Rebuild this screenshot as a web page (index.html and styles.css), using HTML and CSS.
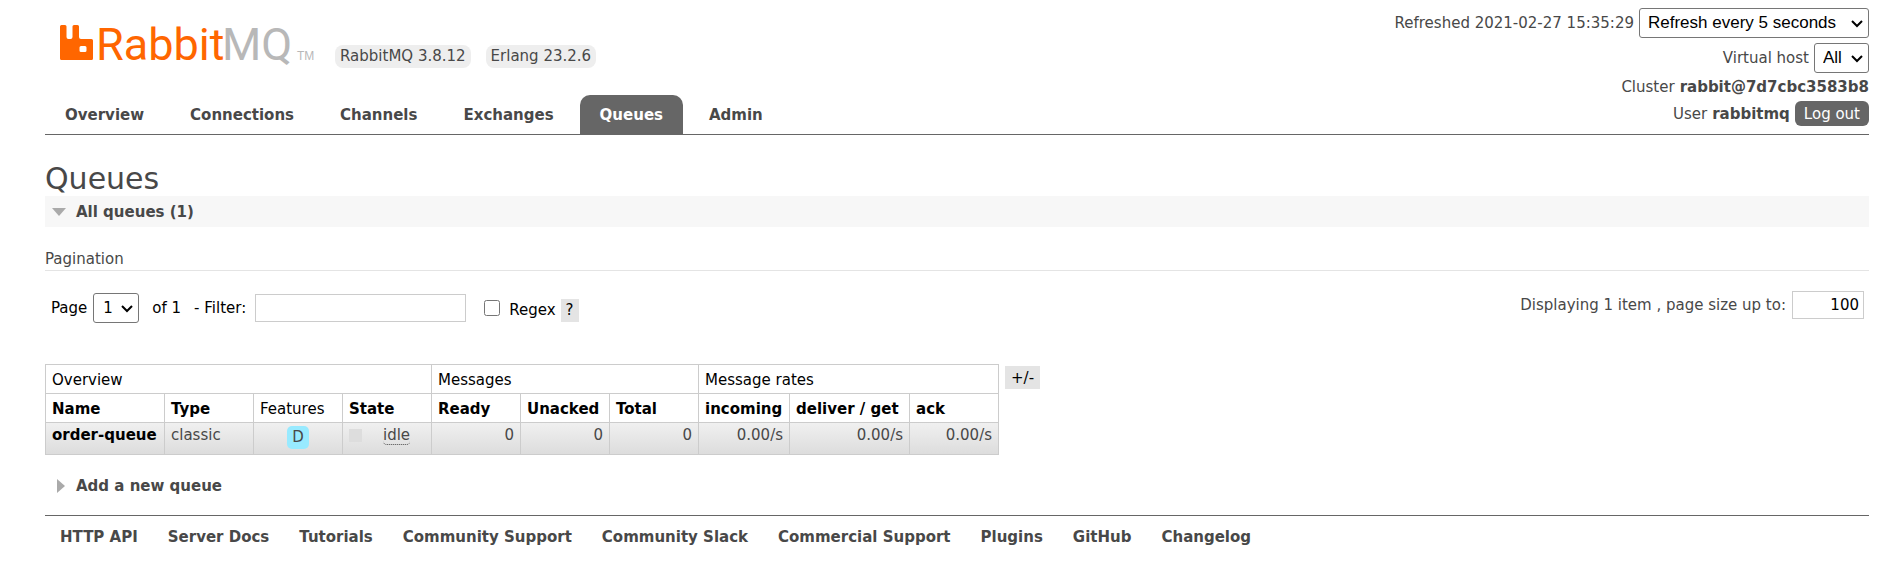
FILE: index.html
```html
<!DOCTYPE html>
<html lang="en">
<head>
<meta charset="utf-8">
<title>RabbitMQ Management</title>
<link rel="stylesheet" href="styles.css">
</head>
<body>
<header class="header">
  <div class="brand-area">
    <div class="brand">
      <svg class="logo" width="260" height="60" viewBox="0 0 260 60" role="img" aria-label="RabbitMQ">
        <path fill="#f60" fill-rule="evenodd" d="M1.500 11h3.500q1.500 0 1.500 1.500V23q0 2 2 2h2q2 0 2-2V12.500q0-1.500 1.500-1.500h3.500q1.500 0 1.500 1.500V23q0 2 2 2h10.500q1.500 0 1.500 1.500v18q0 1.500-1.500 1.500h-30Q0 46 0 44.500v-32Q0 11 1.500 11zM21 32q-1.500 0-1.500 1.500v3q0 1.500 1.500 1.500h4q1.500 0 1.500-1.500v-3q0-1.500-1.500-1.500z"/>
        <text class="logo-word logo-rabbit" x="36" y="46">Rabbit</text>
        <text class="logo-word logo-mq" x="162" y="46">MQ</text>
        <text class="logo-tm" x="237" y="46">TM</text>
      </svg>
      <span class="version">RabbitMQ 3.8.12</span>
      <span class="version">Erlang 23.2.6</span>
    </div>
    <nav class="tabs">
      <a class="tab" href="#overview">Overview</a>
      <a class="tab" href="#connections">Connections</a>
      <a class="tab" href="#channels">Channels</a>
      <a class="tab" href="#exchanges">Exchanges</a>
      <a class="tab tab-active" href="#queues">Queues</a>
      <a class="tab" href="#admin">Admin</a>
    </nav>
  </div>
  <div class="status">
    <div class="status-row"><label for="refresh">Refreshed 2021-02-27 15:35:29</label>
      <span class="select-wrap"><select id="refresh" class="select"><option>Refresh every 5 seconds</option></select><svg class="chevron" width="12" height="8" viewBox="0 0 12 8"><path d="M1 1l5 5 5-5"/></svg></span></div>
    <div class="status-row"><label for="vhost">Virtual host</label>
      <span class="select-wrap"><select id="vhost" class="select"><option>All</option></select><svg class="chevron" width="12" height="8" viewBox="0 0 12 8"><path d="M1 1l5 5 5-5"/></svg></span></div>
    <div class="status-row"><span>Cluster</span><b>rabbit@7d7cbc3583b8</b></div>
    <div class="status-row"><span>User</span><b>rabbitmq</b><button class="logout" type="button">Log out</button></div>
  </div>
</header>
<main class="main">
  <h1 class="title">Queues</h1>
  <h2 class="section section-open"><svg class="arrow" width="14" height="8" viewBox="0 0 14 8"><path d="M0 0h14L7 8z"/></svg>All queues (1)</h2>
  <h3 class="subtitle">Pagination</h3>
  <form class="pagination">
    <div class="pager">
      <label for="page">Page</label>
      <span class="select-wrap"><select id="page" class="select select-page"><option>1</option></select><svg class="chevron" width="12" height="8" viewBox="0 0 12 8"><path d="M1 1l5 5 5-5"/></svg></span>
      <span class="page-count">of 1</span>
      <label class="filter-label" for="filter">- Filter:</label>
      <input id="filter" class="field field-filter" type="text">
      <input id="regex" class="check" type="checkbox">
      <label class="regex-label" for="regex">Regex</label>
      <button class="chip" type="button">?</button>
    </div>
    <div class="page-size">
      <label for="size">Displaying 1 item , page size up to:</label>
      <input id="size" class="field field-size" type="text" value="100">
    </div>
  </form>
  <div class="table-area">
    <table class="queues">
      <colgroup><col class="col-name"><col class="col-std" span="3"><col class="col-std" span="3"><col class="col-incoming"><col class="col-deliver"><col class="col-std"></colgroup>
      <thead>
        <tr><th class="group" colspan="4">Overview</th><th class="group" colspan="3">Messages</th><th class="group" colspan="3">Message rates</th></tr>
        <tr><th>Name</th><th>Type</th><th class="group">Features</th><th>State</th><th>Ready</th><th>Unacked</th><th>Total</th><th>incoming</th><th>deliver / get</th><th>ack</th></tr>
      </thead>
      <tbody>
        <tr><td><a class="queue-link" href="#order-queue">order-queue</a></td><td>classic</td><td class="center"><span class="feature">D</span></td><td><span class="state"><span class="state-box"></span><abbr class="state-text">idle</abbr></span></td><td class="num">0</td><td class="num">0</td><td class="num">0</td><td class="num">0.00/s</td><td class="num">0.00/s</td><td class="num">0.00/s</td></tr>
      </tbody>
    </table>
    <button class="chip chip-columns" type="button">+/-</button>
  </div>
  <h2 class="section"><svg class="arrow arrow-closed" width="8" height="14" viewBox="0 0 8 14"><path d="M0 0v14l8-7z"/></svg>Add a new queue</h2>
</main>
<footer class="footer">
  <a href="#api">HTTP API</a>
  <a href="#docs">Server Docs</a>
  <a href="#tutorials">Tutorials</a>
  <a href="#support">Community Support</a>
  <a href="#slack">Community Slack</a>
  <a href="#commercial">Commercial Support</a>
  <a href="#plugins">Plugins</a>
  <a href="#github">GitHub</a>
  <a href="#changelog">Changelog</a>
</footer>
</body>
</html>
```

FILE: styles.css
```css
* { box-sizing: border-box; }
body {
  margin: 0;
  padding: 8px 31px 0 45px;
  background: #fff;
  color: #484848;
  font: 15px/18px Verdana, "DejaVu Sans", sans-serif;
}
a { color: inherit; text-decoration: none; }
button, input, select { font: inherit; }

.header {
  display: flex;
  justify-content: space-between;
  border-bottom: 1px solid #666;
}
.brand-area { display: flex; flex-direction: column; justify-content: space-between; }
.brand { display: flex; align-items: flex-end; gap: 15px; padding-left: 15px; }
.logo { flex: none; margin-top: 6px; }
.logo-word { font-family: Roboto, sans-serif; font-size: 45px; }
.logo-rabbit { fill: #f60; }
.logo-mq { fill: #b8b8b8; }
.logo-tm { fill: #b8b8b8; font-family: "Liberation Sans", sans-serif; font-size: 12px; }
.version { margin-bottom: 6px; padding: 2px 5px; border-radius: 8px; background: #eee; line-height: 19px; }
.tabs { display: flex; gap: 6px; }
.tab { padding: 11px 20px 10px; border-radius: 10px 10px 0 0; font-weight: bold; }
.tab-active { background: #666; color: #fff; }

.status { display: flex; flex-direction: column; gap: 5px; padding-bottom: 8px; }
.status-row { display: flex; align-items: center; justify-content: flex-end; gap: 5px; }
.select-wrap { position: relative; display: inline-flex; }
.select {
  appearance: none;
  height: 30px;
  padding: 0 33px 0 8px;
  border: 1px solid #767676;
  border-radius: 3px;
  background: #fff;
  color: #000;
  font: 17px/20px "Liberation Sans", sans-serif;
}
#refresh { padding-right: 31px; }
#vhost { padding-right: 26px; }
.chevron { position: absolute; right: 6px; top: 12px; fill: none; stroke: #000; stroke-width: 2; pointer-events: none; }
.logout { height: 25px; padding: 0 9px; border: 0; border-radius: 6px; background: #666; color: #fff; }

.title { margin: 26px 0 0; font-size: 30px; font-weight: normal; line-height: 35px; }
.section { display: flex; align-items: center; margin: 0; height: 31px; font-size: 15px; }
.section-open { background: #f7f7f7; }
.arrow { margin: 0 10px 0 7px; fill: #aaa; }
.arrow-closed { margin: 0 11px 0 12px; }
.subtitle { margin: 22px 0; padding-top: 1px; padding-bottom: 1px; border-bottom: 1px solid #e4e4e4; font-size: 15px; font-weight: normal; line-height: 19px; }

.pagination { display: flex; justify-content: space-between; align-items: flex-start; padding: 0 5px 0 6px; }
.pager { display: flex; align-items: center; color: #000; }
.select-page { width: 46px; margin-left: 6px; padding: 0 0 0 9px; font: inherit; }
.page-count { margin-left: 13px; }
.filter-label { margin: 0 9px 0 13px; }
.field { height: 28px; border: 1px solid #ccc; padding: 3px 4px; background: #fff; color: #000; }
.field-filter { width: 211px; }
.check { width: 16px; height: 16px; margin: 0 9px 0 18px; }
.regex-label { margin-top: 4px; }
.chip { height: 23px; margin: 4px 0 0 5px; padding: 0 5px; border: 0; background: #e4e4e4; color: #000; }
.page-size { display: flex; align-items: center; gap: 6px; margin-top: -2px; }
.field-size { width: 72px; text-align: right; }

.table-area { display: flex; align-items: flex-start; margin-top: 41px; }
.queues { width: 954px; table-layout: fixed; border-collapse: collapse; }
.col-name { width: 119px; }
.col-std { width: 89px; }
.col-incoming { width: 91px; }
.col-deliver { width: 120px; }
.queues th, .queues td { height: 29px; padding: 5px 6px; border: 1px solid #ccc; text-align: left; white-space: nowrap; }
.queues th { padding-bottom: 4px; color: #000; }
.queues .group { font-weight: normal; }
.queues td { height: 32px; padding-top: 3px; vertical-align: top; }
.queues tbody tr { background: linear-gradient(#f0f0f0, #dcdcdc); }
.queues .num { text-align: right; }
.queues .center { text-align: center; }
.queue-link { color: #000; font-weight: bold; }
.feature { display: inline-block; padding: 2px 5px; border-radius: 5px; background: #98eaff; line-height: 19px; }
.state { display: flex; align-items: center; gap: 21px; }
.state-box { width: 13px; height: 13px; background: #ddd; }
.state-text { border-bottom: 1px dotted #484848; border-radius: 4px; line-height: 18px; text-decoration: none; }
.chip-columns { margin: 2px 0 0 6px; padding: 0 6px; }
.table-area + .section { margin-top: 15px; }

.footer { display: flex; flex-wrap: wrap; gap: 30px; margin-top: 14px; padding: 12px 15px; border-top: 1px solid #666; font-weight: bold; }
```
